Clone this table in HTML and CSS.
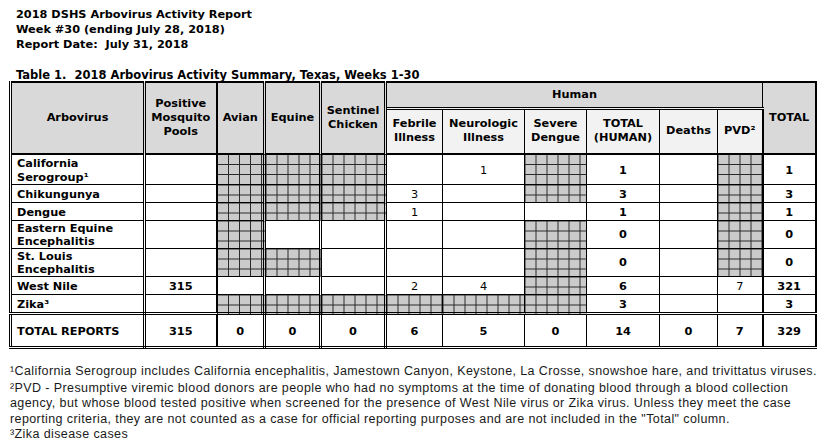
FILE: index.html
```html
<!DOCTYPE html>
<html>
<head>
<meta charset="utf-8">
<link rel="stylesheet" href="styles.css">
</head>
<body>
<div class="page">
  <div class="report-head">
    <div>2018 DSHS Arbovirus Activity Report</div>
    <div>Week #30 (ending July 28, 2018)</div>
    <div>Report Date:&nbsp; July 31, 2018</div>
  </div>
  <div class="caption">Table 1.&nbsp; 2018 Arbovirus Activity Summary, Texas, Weeks 1-30</div>
  <table class="summary">
    <colgroup>
      <col class="c-name"><col class="c-pools"><col class="c-avian"><col class="c-equine"><col class="c-chicken"><col class="c-febrile"><col class="c-neuro"><col class="c-severe"><col class="c-th"><col class="c-deaths"><col class="c-pvd"><col class="c-total">
    </colgroup>
    <thead>
      <tr class="r-h1">
        <th rowspan="2" class="h br-dbl">Arbovirus</th>
        <th rowspan="2" class="h br-thick">Positive<br>Mosquito<br>Pools</th>
        <th rowspan="2" class="h br-dbl">Avian</th>
        <th rowspan="2" class="h br-dbl">Equine</th>
        <th rowspan="2" class="h br-dbl">Sentinel<br>Chicken</th>
        <th colspan="6" class="h human">Human</th>
        <th rowspan="2" class="h">TOTAL</th>
      </tr>
      <tr class="r-h2">
        <th class="sub">Febrile<br>Illness</th>
        <th class="sub">Neurologic<br>Illness</th>
        <th class="sub">Severe<br>Dengue</th>
        <th class="sub">TOTAL<br>(HUMAN)</th>
        <th class="sub">Deaths</th>
        <th class="sub br-thick">PVD²</th>
      </tr>
    </thead>
    <tbody>
      <tr class="r-2l">
        <td class="name">California<br>Serogroup¹</td><td></td><td class="x"></td><td class="x"></td><td class="x"></td><td></td><td>1</td><td class="x"></td><td>1</td><td></td><td class="x"></td><td>1</td>
      </tr>
      <tr class="r-1l">
        <td class="name">Chikungunya</td><td></td><td class="x"></td><td class="x"></td><td class="x"></td><td>3</td><td></td><td class="x"></td><td>3</td><td></td><td class="x"></td><td>3</td>
      </tr>
      <tr class="r-1l">
        <td class="name">Dengue</td><td></td><td class="x"></td><td class="x"></td><td class="x"></td><td>1</td><td></td><td></td><td>1</td><td></td><td class="x"></td><td>1</td>
      </tr>
      <tr class="r-2s">
        <td class="name">Eastern Equine<br>Encephalitis</td><td></td><td class="x"></td><td></td><td></td><td></td><td></td><td class="x"></td><td>0</td><td></td><td class="x"></td><td>0</td>
      </tr>
      <tr class="r-2s">
        <td class="name">St. Louis<br>Encephalitis</td><td></td><td class="x"></td><td class="x"></td><td></td><td></td><td></td><td class="x"></td><td>0</td><td></td><td class="x"></td><td>0</td>
      </tr>
      <tr class="r-1l">
        <td class="name">West Nile</td><td>315</td><td></td><td></td><td></td><td>2</td><td>4</td><td class="x"></td><td>6</td><td></td><td>7</td><td>321</td>
      </tr>
      <tr class="r-zika">
        <td class="name">Zika³</td><td></td><td class="x"></td><td class="x"></td><td class="x"></td><td class="x"></td><td class="x"></td><td class="x"></td><td>3</td><td></td><td></td><td>3</td>
      </tr>
      <tr class="r-total">
        <td class="name">TOTAL REPORTS</td><td>315</td><td>0</td><td>0</td><td>0</td><td>6</td><td>5</td><td>0</td><td>14</td><td>0</td><td>7</td><td>329</td>
      </tr>
    </tbody>
  </table>
  <div class="notes">
    <p class="first">¹California Serogroup includes California encephalitis, Jamestown Canyon, Keystone, La Crosse, snowshoe hare, and trivittatus viruses.</p>
    <p>²PVD - Presumptive viremic blood donors are people who had no symptoms at the time of donating blood through a blood collection<br>agency, but whose blood tested positive when screened for the presence of West Nile virus or Zika virus. Unless they meet the case<br>reporting criteria, they are not counted as a case for official reporting purposes and are not included in the "Total" column.</p>
    <p>³Zika disease cases</p>
  </div>
</div>
</body>
</html>
```

FILE: styles.css
```css
html, body {
  margin: 0;
  padding: 0;
  background: #ffffff;
  color: #000000;
}

body {
  font-family: "DejaVu Sans", Verdana, sans-serif;
}

.page {
  padding-top: 7px;
}

.report-head {
  padding-left: 16px;
  font-weight: bold;
  font-size: 11.3px;
  line-height: 15px;
}

.caption {
  margin: 17.5px 0 0 16px;
  font-weight: bold;
  font-size: 11.5px;
  line-height: 11.5px;
}

.summary {
  margin-left: 9px;
  border-collapse: collapse;
  table-layout: fixed;
  width: 806px;
  font-size: 11.3px;
  border-top: 2px solid #000;
  border-right: 2px solid #000;
  border-left: 3px double #000;
  border-bottom: 3px double #000;
}

.c-name { width: 134px; }
.c-pools { width: 72px; }
.c-avian { width: 48px; }
.c-equine { width: 56px; }
.c-chicken { width: 65px; }
.c-febrile { width: 57px; }
.c-neuro { width: 82px; }
.c-severe { width: 62px; }
.c-th { width: 73px; }
.c-deaths { width: 58px; }
.c-pvd { width: 45px; }
.c-total { width: 53px; }

.summary th,
.summary td {
  border: 1px solid #000;
  padding: 0;
  text-align: center;
  vertical-align: middle;
  line-height: 14px;
}

.summary th {
  font-weight: bold;
}

.summary th.h {
  background: #d9d9d9;
  border-bottom: 2px solid #000;
}

.summary th.human {
  border-bottom: 3px double #000;
}

.summary th.sub {
  background: #f2f2f2;
  border-bottom: 2px solid #000;
}

.summary .br-dbl {
  border-right: 3px double #000;
}

.summary .br-thick {
  border-right: 2px solid #000;
}

.r-h1 { height: 26px; }
.r-h2 { height: 46px; }
.r-2l { height: 30px; }
.r-1l { height: 18px; }
.r-2s { height: 28px; }
.r-zika { height: 19px; }
.r-total { height: 34px; }

.summary td {
  font-weight: normal;
  padding-top: 2px;
}

.summary tr.r-2l td {
  line-height: 13.5px;
}

.summary tr.r-2s td {
  line-height: 13px;
  padding-top: 0;
}

.summary td.name {
  text-align: left;
  padding-left: 5px;
  font-weight: bold;
}

.summary tbody td:nth-child(1) { border-right: 3px double #000; }
.summary tbody td:nth-child(2) { border-right: 2px solid #000; font-weight: bold; }
.summary tbody td:nth-child(3),
.summary tbody td:nth-child(4),
.summary tbody td:nth-child(5) { border-right: 3px double #000; }
.summary tbody td:nth-child(9),
.summary tbody td:nth-child(12) { font-weight: bold; }
.summary tbody td:nth-child(11) { border-right: 2px solid #000; }

.summary tr.r-zika td { border-bottom: 3px double #000; }
.summary tr.r-total td { font-weight: bold; border-bottom: 3px double #000; }

.summary td.x {
  background-color: #cbcbcb;
  background-image:
    linear-gradient(to right, #2a2a2a 1px, transparent 1px),
    linear-gradient(to bottom, #2a2a2a 1px, transparent 1px);
  background-size: 11px 10px;
  background-position: -1px -1px;
}

.notes {
  margin-top: 15px;
  padding-left: 10px;
  font-family: "Liberation Sans", Arial, sans-serif;
  font-size: 12.5px;
  letter-spacing: 0.4px;
  line-height: 15.5px;
  color: #1a1a1a;
}

.notes p {
  margin: 0;
}

.notes p.first {
  margin-bottom: 1px;
}
```
